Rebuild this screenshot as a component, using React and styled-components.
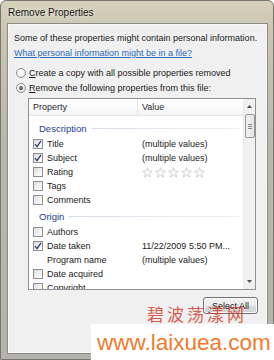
import React from 'react';
import styled, { createGlobalStyle } from 'styled-components';

const Global = createGlobalStyle`
  html, body { margin: 0; padding: 0; }
  body {
    width: 274px;
    height: 360px;
    overflow: hidden;
    font-family: "Liberation Sans", Arial, sans-serif;
  }
`;

const Frame = styled.div`
  position: relative;
  width: 274px;
  height: 360px;
  box-sizing: border-box;
  display: flex;
  flex-direction: column;
  background: linear-gradient(180deg, #d6cfbb 0%, #c9c4b3 10%, #b9b7ad 40%, #b4b3ab 100%);
  border: 1px solid #77776f;
  border-radius: 6px 6px 0 0;
  padding: 0 5px 5px 6px;
`;

const TitleBar = styled.div`
  height: 22px;
  display: flex;
  align-items: center;
  padding-left: 1px;
  font-size: 10px;
  color: #1b1b1b;
  text-shadow: 0 0 6px rgba(255, 255, 255, 0.9);
`;

const Panel = styled.div`
  flex: 1;
  background: #f0f0f0;
  border: 1px solid #8b8b85;
  box-shadow: inset 0 0 0 1px #fafafa;
  display: flex;
  flex-direction: column;
  padding: 7px 11px 0 6px;
  font-size: 9px;
  color: #1a1a1a;
  white-space: nowrap;
`;

const Intro = styled.div`
  line-height: 14px;
`;

const Link = styled.a`
  color: #2a6cbc;
  text-decoration: underline;
  line-height: 14px;
  margin-top: 1px;
`;

const Radios = styled.div`
  display: flex;
  flex-direction: column;
  margin-top: 5px;
`;

const RadioRow = styled.label`
  display: flex;
  align-items: center;
  height: 15px;
  gap: 3px;
  padding-left: 2px;
`;

const RadioDot = styled.span`
  width: 8px;
  height: 8px;
  border-radius: 50%;
  border: 1px solid #8e8f8f;
  background: radial-gradient(circle at 40% 40%, #ffffff 0%, #e4e4e4 100%);
  display: flex;
  align-items: center;
  justify-content: center;
  &::after {
    content: '';
    width: 4px;
    height: 4px;
    border-radius: 50%;
    background: ${({ $on }) => ($on ? 'radial-gradient(circle at 40% 40%, #7a8a94, #26323a)' : 'transparent')};
  }
`;

const Key = styled.span`
  text-decoration: underline;
`;

const ListBox = styled.div`
  margin: 3px 0 0 14px;
  height: 190px;
  border: 1px solid #8d9196;
  background: #fff;
  display: flex;
  overflow: hidden;
`;

const ListMain = styled.div`
  flex: 1;
  display: flex;
  flex-direction: column;
  overflow: hidden;
`;

const Header = styled.div`
  display: grid;
  grid-template-columns: 109px 1fr;
  height: 16px;
  flex: none;
  border-bottom: 1px solid #e3e6ea;
  background: linear-gradient(180deg, #ffffff 0%, #fbfbfc 60%, #f3f4f6 100%);
`;

const HeaderCell = styled.div`
  display: flex;
  align-items: center;
  padding-left: 4px;
  border-right: ${({ $divider }) => ($divider ? '1px solid #e5e5e5' : 'none')};
  color: #2a2a2a;
`;

const Body = styled.div`
  padding-top: 3px;
  display: flex;
  flex-direction: column;
`;

const Group = styled.div`
  height: 18px;
  display: flex;
  align-items: center;
  gap: 5px;
  padding-left: 10px;
  color: #1e3d8c;
  font-size: 9.5px;
  &::after {
    content: '';
    flex: 1;
    height: 1px;
    margin-right: 4px;
    background: linear-gradient(90deg, #d6dde8, #eef1f5);
  }
`;

const Row = styled.div`
  display: grid;
  grid-template-columns: 109px 1fr;
  height: 14px;
  align-items: center;
  flex: none;
`;

const NameCell = styled.div`
  display: flex;
  align-items: center;
  gap: 4px;
  padding-left: 4px;
`;

const Box = styled.span`
  width: 8px;
  height: 8px;
  flex: none;
  border: 1px solid #8f8f8f;
  background: linear-gradient(135deg, #dcdcdc 0%, #f4f4f4 60%, #ffffff 100%);
  display: flex;
  align-items: center;
  justify-content: center;
  visibility: ${({ $hidden }) => ($hidden ? 'hidden' : 'visible')};
`;

const ValueCell = styled.div`
  padding-left: 4px;
  display: flex;
  align-items: center;
  gap: 2px;
  white-space: nowrap;
`;

const Scrollbar = styled.div`
  width: 11px;
  flex: none;
  background: #f0f0f0;
  border-left: 1px solid #ebebeb;
  display: flex;
  flex-direction: column;
  align-items: center;
`;

const Arrow = styled.div`
  height: 15px;
  width: 100%;
  display: flex;
  align-items: center;
  justify-content: center;
`;

const Thumb = styled.div`
  width: 8px;
  height: 22px;
  border: 1px solid #9a9a9a;
  border-radius: 2px;
  background: linear-gradient(90deg, #f2f2f2, #e4e4e4);
  display: flex;
  flex-direction: column;
  align-items: center;
  justify-content: center;
  gap: 1px;
  span {
    width: 4px;
    height: 1px;
    background: #8a8a8a;
  }
`;

const Spacer = styled.div`
  flex: 1;
`;

const Footer = styled.div`
  display: flex;
  justify-content: flex-end;
  margin-top: 7px;
`;

const Button = styled.button`
  width: 55px;
  height: 17px;
  margin-right: -2px;
  font-family: inherit;
  font-size: 9px;
  color: #1a1a1a;
  border: 1px solid #707070;
  border-radius: 3px;
  background: linear-gradient(180deg, #f2f2f2 0%, #ebebeb 50%, #dddddd 51%, #cfcfcf 100%);
  box-shadow: inset 0 0 0 1px #fbfbfb;
  padding: 0;
`;

const WaterCn = styled.div`
  position: absolute;
  left: 146px;
  top: 302px;
  font-family: "Noto Sans CJK SC", sans-serif;
  font-size: 17px;
  line-height: 22px;
  letter-spacing: 3px;
  color: #cf3a2e;
  opacity: 0.8;
`;

const WaterBox = styled.div`
  position: absolute;
  left: 90px;
  top: 323px;
  width: 184px;
  height: 37px;
  background: #fff;
  display: flex;
  align-items: center;
  padding-left: 6px;
  box-sizing: border-box;
  font-family: "Liberation Sans", Arial, sans-serif;
  font-size: 22.5px;
  color: #f07a2c;
`;

const Check = () => (
  <svg width="8" height="8" viewBox="0 0 8 8">
    <path d="M1 4.2 L3 6.6 L7 0.8" fill="none" stroke="#2b3d73" strokeWidth="1.3" />
  </svg>
);

const Star = () => (
  <svg width="11" height="11" viewBox="0 0 12 12">
    <path
      d="M6 0.8 L7.5 4.3 L11.3 4.6 L8.4 7.1 L9.3 10.9 L6 8.9 L2.7 10.9 L3.6 7.1 L0.7 4.6 L4.5 4.3 Z"
      fill="#fbfbfb"
      stroke="#c8c8c8"
      strokeWidth="0.9"
    />
  </svg>
);

const groups = [
  {
    title: 'Description',
    rows: [
      { name: 'Title', checked: true, value: '(multiple values)' },
      { name: 'Subject', checked: true, value: '(multiple values)' },
      { name: 'Rating', stars: true },
      { name: 'Tags' },
      { name: 'Comments' },
    ],
  },
  {
    title: 'Origin',
    rows: [
      { name: 'Authors' },
      { name: 'Date taken', checked: true, value: '11/22/2009 5:50 PM...' },
      { name: 'Program name', noBox: true, value: '(multiple values)' },
      { name: 'Date acquired' },
      { name: 'Copyright' },
    ],
  },
];

export default function App() {
  return (
    <>
      <Global />
      <Frame>
        <TitleBar>Remove Properties</TitleBar>
        <Panel>
          <Intro>Some of these properties might contain personal information.</Intro>
          <Link>What personal information might be in a file?</Link>
          <Radios>
            <RadioRow>
              <RadioDot />
              <span><Key>C</Key>reate a copy with all possible properties removed</span>
            </RadioRow>
            <RadioRow>
              <RadioDot $on />
              <span><Key>R</Key>emove the following properties from this file:</span>
            </RadioRow>
          </Radios>
          <ListBox>
            <ListMain>
              <Header>
                <HeaderCell $divider>Property</HeaderCell>
                <HeaderCell>Value</HeaderCell>
              </Header>
              <Body>
                {groups.map((g) => (
                  <React.Fragment key={g.title}>
                    <Group>{g.title}</Group>
                    {g.rows.map((r) => (
                      <Row key={r.name}>
                        <NameCell>
                          <Box $hidden={r.noBox}>{r.checked && <Check />}</Box>
                          {r.name}
                        </NameCell>
                        <ValueCell>
                          {r.stars ? [0, 1, 2, 3, 4].map((i) => <Star key={i} />) : r.value}
                        </ValueCell>
                      </Row>
                    ))}
                  </React.Fragment>
                ))}
              </Body>
            </ListMain>
            <Scrollbar>
              <Arrow>
                <svg width="5" height="3" viewBox="0 0 5 3"><path d="M0 3 L2.5 0 L5 3 Z" fill="#4d4d4d" /></svg>
              </Arrow>
              <Thumb><span /><span /><span /></Thumb>
              <Spacer />
              <Arrow>
                <svg width="5" height="3" viewBox="0 0 5 3"><path d="M0 0 L2.5 3 L5 0 Z" fill="#4d4d4d" /></svg>
              </Arrow>
            </Scrollbar>
          </ListBox>
          <Footer>
            <Button>Select All</Button>
          </Footer>
        </Panel>
        <WaterCn>碧波荡漾网</WaterCn>
        <WaterBox>www.laixuea.com</WaterBox>
      </Frame>
    </>
  );
}
